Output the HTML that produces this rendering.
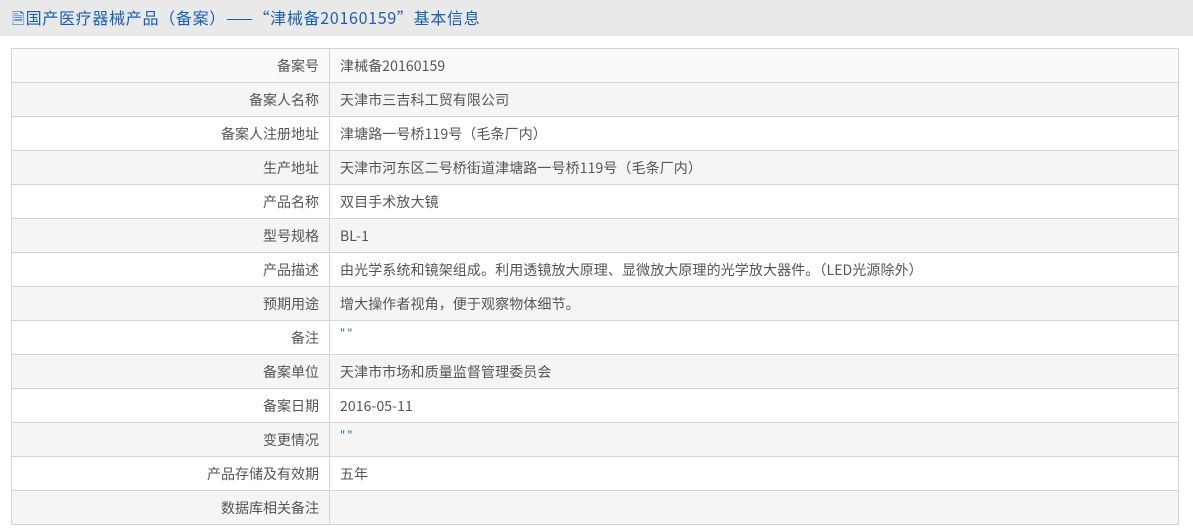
<!DOCTYPE html>
<html><head><meta charset="utf-8"><style>
body{margin:0;width:1193px;height:532px;background:#fff;font-family:"Noto Sans CJK SC","Liberation Sans",sans-serif;overflow:hidden}
.hd{height:36px;background:#e9e9e9;color:#1a5fb4;font-size:16px;line-height:35px;padding-left:12px;white-space:nowrap;letter-spacing:0.7px}
table{position:absolute;left:11px;top:48px;width:1168px;border-collapse:collapse;font-size:14px;color:#555}
td{height:33px;border:1px solid #d4d4d4;padding:0 10px;line-height:20px;vertical-align:middle}
td.l{width:297px;text-align:right}
td+td{letter-spacing:0.1px}
tr:nth-child(even){background:#f5f5f5}
tr:first-child{background:#f9fafc}
.q{color:#1a5fb4;font-size:11px;line-height:11px;vertical-align:top;letter-spacing:2px}
</style></head><body>
<div class="hd">🗎国产医疗器械产品（备案）——“津械备20160159”基本信息</div>
<table>
<tr><td class="l">备案号</td><td>津械备20160159</td></tr>
<tr><td class="l">备案人名称</td><td>天津市三吉科工贸有限公司</td></tr>
<tr><td class="l">备案人注册地址</td><td>津塘路一号桥119号（毛条厂内）</td></tr>
<tr><td class="l">生产地址</td><td>天津市河东区二号桥街道津塘路一号桥119号（毛条厂内）</td></tr>
<tr><td class="l">产品名称</td><td>双目手术放大镜</td></tr>
<tr><td class="l">型号规格</td><td>BL-1</td></tr>
<tr><td class="l">产品描述</td><td>由光学系统和镜架组成。利用透镜放大原理、显微放大原理的光学放大器件。（LED光源除外）</td></tr>
<tr><td class="l">预期用途</td><td>增大操作者视角，便于观察物体细节。</td></tr>
<tr><td class="l">备注</td><td><span class="q">""</span></td></tr>
<tr><td class="l">备案单位</td><td>天津市市场和质量监督管理委员会</td></tr>
<tr><td class="l">备案日期</td><td>2016-05-11</td></tr>
<tr><td class="l">变更情况</td><td><span class="q">""</span></td></tr>
<tr><td class="l">产品存储及有效期</td><td>五年</td></tr>
<tr><td class="l">数据库相关备注</td><td></td></tr>
</table>
</body></html>
